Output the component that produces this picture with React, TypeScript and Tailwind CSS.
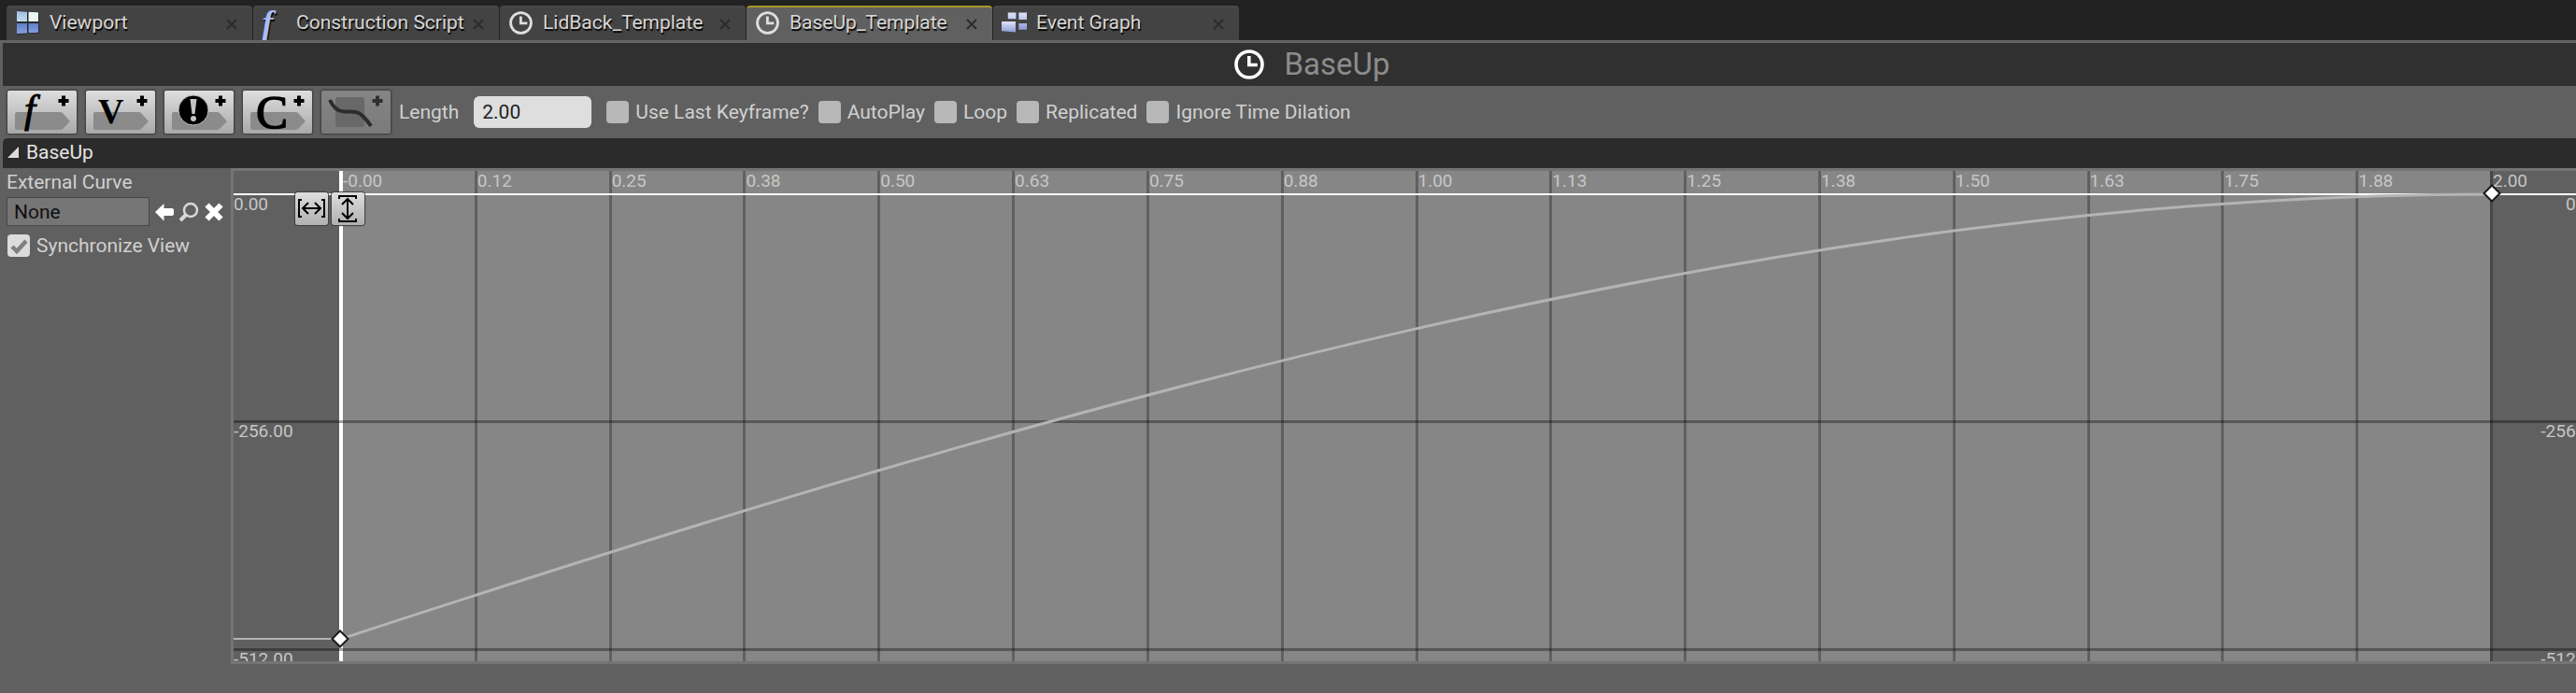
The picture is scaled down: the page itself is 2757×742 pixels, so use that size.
import React from "react";

const tabs = [
  { label: "Viewport", icon: "viewport" },
  { label: "Construction Script", icon: "function" },
  { label: "LidBack_Template", icon: "clock" },
  { label: "BaseUp_Template", icon: "clock", active: true },
  { label: "Event Graph", icon: "graph" },
];

const ticks = ["-0.00", "0.12", "0.25", "0.38", "0.50", "0.63", "0.75", "0.88", "1.00", "1.13", "1.25", "1.38", "1.50", "1.63", "1.75", "1.88"];

function Clock({ className }: { className: string }) {
  return (
    <svg viewBox="0 0 32 32" className={className} fill="none" stroke="currentColor" aria-hidden="true">
      <circle cx="16" cy="16" r="14" strokeWidth="3.6" />
      <path d="M15.8 7v9.500h9" strokeWidth="3.6" />
    </svg>
  );
}

function TabIcon({ name }: { name: string }) {
  if (name === "clock") return <Clock className="size-[25px] text-[#dedede]" />;
  if (name === "viewport")
    return (
      <svg viewBox="0 0 26 26" className="size-[26px]" aria-hidden="true">
        <defs>
          <linearGradient id="vp" x1="0" y1="0" x2="0" y2="1">
            <stop offset="0" stopColor="#a3bfe3" />
            <stop offset="1" stopColor="#c0dced" />
          </linearGradient>
          <linearGradient id="vp2" x1="0" y1="0" x2="0" y2="1">
            <stop offset="0" stopColor="#5c80c8" />
            <stop offset="1" stopColor="#86a0e0" />
          </linearGradient>
        </defs>
        <path d="M1 .5l24 1.500v22.500L1 26z" fill="#2a2a2a" />
        <path d="M1 1l11 .7V12H1z" fill="url(#vp)" />
        <path d="M13.500 1.700l10.500.6V12H13.500z" fill="#e9f6f6" />
        <path d="M1 14h11v10.500L1 25z" fill="url(#vp2)" />
        <path d="M13.500 14H24v9.700l-10.500.6z" fill="url(#vp2)" />
      </svg>
    );
  if (name === "function")
    return (
      <span aria-hidden="true" className="flex w-[26px] justify-start font-['Liberation_Serif',serif] text-[36px] leading-[28px] font-bold text-[#a9bdf5] italic">
        f
      </span>
    );
  return (
    <svg viewBox="0 0 28 24" className="h-[24px] w-[28px]" aria-hidden="true">
      <defs>
        <linearGradient id="eg" x1="0" y1="0" x2="0" y2="1">
          <stop offset="0" stopColor="#dfe5f8" />
          <stop offset="1" stopColor="#8a9ad6" />
        </linearGradient>
      </defs>
      <path d="M7 1h9v7H7zM19 1h9v8h-9zM19 13h9v7h-9z" fill="url(#eg)" />
      <path d="M0 11h15.500v12L0 21.500z" fill="url(#eg)" />
    </svg>
  );
}

function Plus() {
  return <path d="M60 5.500v11M54.500 11h11" stroke="#000" strokeWidth="4" />;
}

function ToolButton({ label, children, disabled }: { label: string; children: React.ReactNode; disabled?: boolean }) {
  return (
    <button
      type="button"
      aria-label={label}
      disabled={disabled}
      className="h-[46px] w-[74px] rounded-[2px] bg-linear-to-b from-[#dedede] to-[#a9a9a9] shadow-[0_0_2px_1px_#3a3a3a] disabled:from-[#858585] disabled:to-[#7a7a7a]"
    >
      <svg viewBox="0 0 74 46" className="h-full w-full overflow-visible" fill="none" aria-hidden="true">
        {children}
      </svg>
    </button>
  );
}

function Arrow() {
  return <path d="M10 23h46q2 0 3 1l8 9-8 8q-1 1-3 1H10q-2 0-2-2V25q0-2 2-2z" fill="#8b8b8b" />;
}

function Check({ label, checked }: { label: string; checked?: boolean }) {
  return (
    <label className="flex items-center gap-[7px]">
      <span className="relative flex size-6">
        <input type="checkbox" defaultChecked={checked} className="peer size-6 appearance-none rounded-[4px] bg-[#b8b8b8] checked:bg-[#dcdcdc]" />
        <svg viewBox="0 0 24 24" className="pointer-events-none absolute inset-0 hidden size-6 peer-checked:block" fill="none" stroke="#808080" strokeWidth="4.500" aria-hidden="true">
          <path d="M5 13l5 5L20 7" />
        </svg>
      </span>
      {label}
    </label>
  );
}

function Key({ className }: { className: string }) {
  return (
    <svg viewBox="0 0 20 20" className={className} aria-hidden="true">
      <path d="M10 1.500L18.500 10 10 18.500 1.500 10z" fill="#fff" stroke="#1a1a1a" strokeWidth="2" />
    </svg>
  );
}

export default function App() {
  return (
    <div className="flex min-h-screen flex-col overflow-hidden bg-[#606060] font-['Roboto',sans-serif] text-[21px] leading-6 text-[#d0d0d0]">
      <nav className="flex h-[43px] items-end gap-px bg-[#222222] pt-[6px] pl-[7px]">
        {tabs.map((t) => (
          <div
            key={t.label}
            className={
              t.active
                ? "flex h-[37px] w-[263px] items-center rounded-t-[4px] border-t-2 border-[#a8982a] bg-[#606060] pr-4 pb-[3px] pl-[9px]"
                : "flex h-[37px] w-[263px] items-center rounded-t-[4px] border-t-2 border-[#484848] bg-[#434343] pr-4 pb-[3px] pl-[9px]"
            }
          >
            <button type="button" className="flex flex-1 items-center gap-[10px] whitespace-nowrap text-[#d6d6d6] [text-shadow:1px_2px_1px_#000]">
              <span className="flex w-[27px] justify-center">
                <TabIcon name={t.icon} />
              </span>
              <span>{t.label}</span>
            </button>
            <button type="button" aria-label={"Close " + t.label}>
              <svg viewBox="0 0 12 12" className="mt-[3px] size-3" stroke="#2c2c2c" strokeWidth="2" aria-hidden="true">
                <path d="M1 1l10 10M11 1L1 11" />
              </svg>
            </button>
          </div>
        ))}
      </nav>
      <div className="h-[3px] bg-[#646464]" />
      <header className="ml-[3px] flex h-[46px] items-center justify-center gap-[22px] bg-[#303030] pb-px pl-12">
        <Clock className="size-8 text-white" />
        <h1 className="text-[33px] leading-10 text-[#8c8c8c]">BaseUp</h1>
      </header>

      <div className="flex h-14 items-center pl-2">
        <div className="flex gap-[10px]">
          <ToolButton label="Add float track">
            <Arrow />
            <text x="18" y="34" fontSize="43" fontStyle="italic" fontFamily="Liberation Serif" fill="#000" stroke="#000">f</text>
            <Plus />
          </ToolButton>
          <ToolButton label="Add vector track">
            <Arrow />
            <text x="13" y="35" fontSize="38" fontWeight="bold" fontFamily="Liberation Serif" fill="#000">V</text>
            <Plus />
          </ToolButton>
          <ToolButton label="Add event track">
            <Arrow />
            <circle cx="31" cy="21" r="16" fill="#000" stroke="#bcbcbc" />
            <path d="M27.500 9h7l-2 16h-3z" fill="#c4c4c4" />
            <circle cx="31" cy="30" r="3" fill="#c4c4c4" />
            <Plus />
          </ToolButton>
          <ToolButton label="Add color track">
            <Arrow />
            <text x="14" y="40" fontSize="51" fontFamily="Liberation Serif" fill="#000" stroke="#000" strokeWidth="1.500">C</text>
            <Plus />
          </ToolButton>
          <ToolButton label="Add external curve" disabled>
            <rect x="15" y="7" width="31" height="32" rx="3" fill="#686868" />
            <path d="M9 10C12 17 16 22 24 22.500S38 21 44 27 51 35 53 38" stroke="#2d2d2d" strokeWidth="4" />
            <path d="M60 5.500v11M54.500 11h11" stroke="#303030" strokeWidth="4" />
          </ToolButton>
        </div>
        <label className="flex items-center gap-4 pl-[9px]">
          Length
          <input type="text" defaultValue="2.00" className="h-[34px] w-[126px] rounded-[6px] bg-[#dedede] px-[9px] text-[#222]" />
        </label>
        <div className="flex gap-[10px] pl-4">
          <Check label="Use Last Keyframe?" />
          <Check label="AutoPlay" />
          <Check label="Loop" />
          <Check label="Replicated" />
          <Check label="Ignore Time Dilation" />
        </div>
      </div>

      <h2 className="ml-[3px] flex h-8 items-center gap-[8px] rounded-tl-[5px] bg-[#2b2b2b] pb-[2px] pl-[5px] text-[#e4e4e4]">
        <svg viewBox="0 0 12 12" className="size-3" aria-hidden="true">
          <path d="M12 0v12H0z" fill="#dcdcdc" />
        </svg>
        BaseUp
      </h2>

      <main className="flex h-[531px]">
        <aside className="flex w-[247px] shrink-0 flex-col pt-[3px] pl-[7px]">
          <label htmlFor="curve">External Curve</label>
          <div className="mt-1 flex items-center">
            <input id="curve" readOnly defaultValue="None" className="h-[31px] w-[153px] border border-[#484848] bg-[#757575] px-[7px] text-[#101010]" />
            <button type="button" aria-label="Use selected asset" className="ml-[6px]">
              <svg viewBox="0 0 20 20" className="size-5" aria-hidden="true">
                <path d="M0 10L9.500 1v5H18q2 0 2 2v4q0 2-2 2H9.500v5.500z" fill="#fff" />
              </svg>
            </button>
            <button type="button" aria-label="Browse" className="ml-[5px]">
              <svg viewBox="0 0 22 22" className="size-[22px]" fill="none" stroke="#d8d8d8" aria-hidden="true">
                <circle cx="13" cy="9" r="7" strokeWidth="2.500" />
                <path d="M8 14l-6 6" strokeWidth="4" />
              </svg>
            </button>
            <button type="button" aria-label="Clear" className="ml-[6px]">
              <svg viewBox="0 0 20 20" className="size-5" stroke="#fff" strokeWidth="6" aria-hidden="true">
                <path d="M2.500 2.500l15 15M17.500 2.500l-15 15" />
              </svg>
            </button>
          </div>
          <div className="mt-[9px] pl-px">
            <Check label="Synchronize View" checked />
          </div>
        </aside>

        <section aria-label="Curve editor" className="relative flex flex-1 overflow-hidden border-y-[3px] border-l-[3px] border-[#747474] text-[19px] leading-[22px] text-[#c6c6c6]">
          <div className="w-[113px] shrink-0" />
          <div className="flex flex-1 bg-[#868686]">
            {ticks.map((t, i) => (
              <div key={t} className={i === 0 ? "flex-1 border-l-4 border-white" : "flex-1 border-l-[3px] border-[#606060]"}>
                {t}
              </div>
            ))}
          </div>
          <div className="w-[92px] shrink-0 border-l-[3px] border-[#474747]">2.00</div>

          <div className="absolute inset-x-0 top-[267px] h-[3px] bg-black/35" />
          <div className="absolute inset-x-0 top-[511px] h-[3px] bg-black/35" />
          <div className="absolute inset-x-0 top-[24px] h-[2px] bg-white" />
          <div className="absolute top-[500px] left-0 h-[2px] w-[113px] bg-[#b4b4b4]" />
          <svg viewBox="0 0 2302 525" preserveAspectRatio="none" className="absolute top-0 right-[90px] left-[115px] h-[525px] w-[calc(100%-205px)]" fill="none" aria-hidden="true">
            <path d="M0 501C767 250 1535 25 2302 25" stroke="#b4b4b4" strokeWidth="3" vectorEffect="non-scaling-stroke" />
          </svg>

          <span className="absolute top-[25px] left-0">0.00</span>
          <span className="absolute top-[268px] left-0">-256.00</span>
          <span className="absolute top-[512px] left-0">-512.00</span>
          <span className="absolute top-[25px] right-[-26px]">0.00</span>
          <span className="absolute top-[268px] right-[-26px]">-256.00</span>
          <span className="absolute top-[512px] right-[-26px]">-512.00</span>

          <Key className="absolute top-[491px] left-[104px] size-5" />
          <Key className="absolute top-[14px] right-[80px] size-5" />

          <div className="absolute top-[23px] left-[66px] flex gap-[4px]">
            <button type="button" aria-label="Fit horizontal" className="h-[35px] w-[35px] rounded-[3px] bg-linear-to-b from-[#dedede] to-[#b0b0b0] shadow-[0_0_1px_1px_#3e3e3e]">
              <svg viewBox="0 0 35 35" className="size-[35px]" fill="none" stroke="#000" strokeWidth="2" aria-hidden="true">
                <path d="M7 8H4v18h3M28 8h3v18h-3M8 17h19M14 11l-6 6 6 6M21 11l6 6-6 6" />
              </svg>
            </button>
            <button type="button" aria-label="Fit vertical" className="h-[35px] w-[35px] rounded-[3px] bg-linear-to-b from-[#dedede] to-[#b0b0b0] shadow-[0_0_1px_1px_#3e3e3e]">
              <svg viewBox="0 0 35 35" className="size-[35px]" fill="none" stroke="#000" strokeWidth="2" aria-hidden="true">
                <path d="M8 7V4h18v3M8 28v3h18v-3M17 7v21M11 13l6-6 6 6M11 22l6 6 6-6" />
              </svg>
            </button>
          </div>
        </section>
      </main>
    </div>
  );
}
